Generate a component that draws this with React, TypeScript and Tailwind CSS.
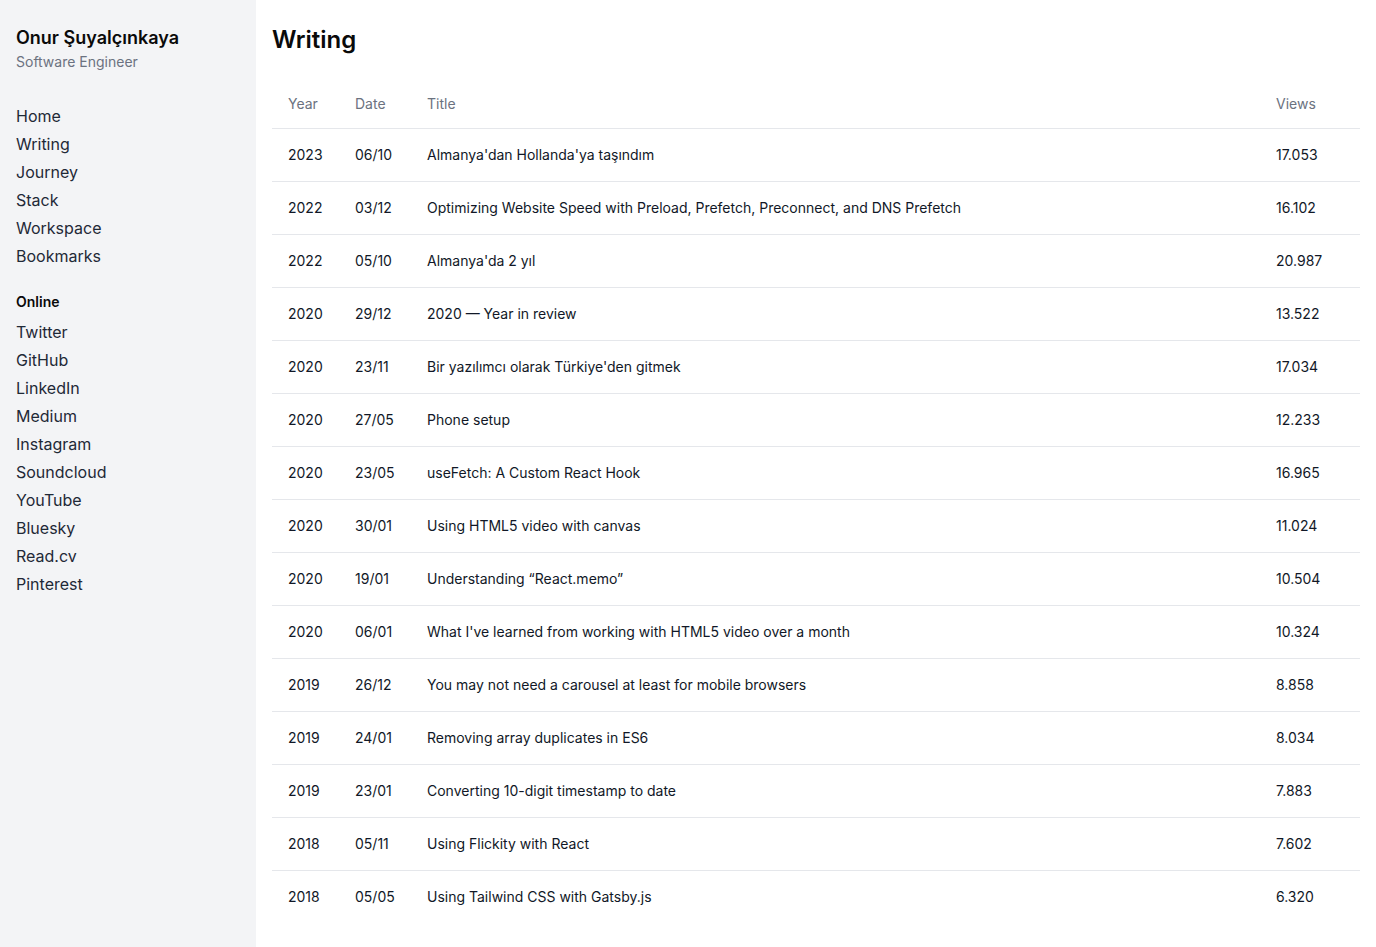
import React from "react";

const nav = ["Home", "Writing", "Journey", "Stack", "Workspace", "Bookmarks"];
const online = ["Twitter", "GitHub", "LinkedIn", "Medium", "Instagram", "Soundcloud", "YouTube", "Bluesky", "Read.cv", "Pinterest"];

const rows: [string, string, string, string][] = [
  ["2023", "06/10", "Almanya'dan Hollanda'ya taşındım", "17.053"],
  ["2022", "03/12", "Optimizing Website Speed with Preload, Prefetch, Preconnect, and DNS Prefetch", "16.102"],
  ["2022", "05/10", "Almanya'da 2 yıl", "20.987"],
  ["2020", "29/12", "2020 — Year in review", "13.522"],
  ["2020", "23/11", "Bir yazılımcı olarak Türkiye'den gitmek", "17.034"],
  ["2020", "27/05", "Phone setup", "12.233"],
  ["2020", "23/05", "useFetch: A Custom React Hook", "16.965"],
  ["2020", "30/01", "Using HTML5 video with canvas", "11.024"],
  ["2020", "19/01", "Understanding “React.memo”", "10.504"],
  ["2020", "06/01", "What I've learned from working with HTML5 video over a month", "10.324"],
  ["2019", "26/12", "You may not need a carousel at least for mobile browsers", "8.858"],
  ["2019", "24/01", "Removing array duplicates in ES6", "8.034"],
  ["2019", "23/01", "Converting 10-digit timestamp to date", "7.883"],
  ["2018", "05/11", "Using Flickity with React", "7.602"],
  ["2018", "05/05", "Using Tailwind CSS with Gatsby.js", "6.320"],
];

export default function App() {
  return (
    <div
      className="flex min-h-[947px] bg-white text-[#111827]"
      style={{ fontFamily: "Inter, 'Noto Sans', sans-serif" }}
    >
      <aside className="w-64 shrink-0 bg-[#f3f4f6] px-4 pt-[24px]">
        <div className="text-lg font-semibold leading-7 text-[#0a0a0a]">Onur Şuyalçınkaya</div>
        <div className="text-sm leading-5 text-[#6b7280]">Software Engineer</div>
        <nav className="mt-[30px] flex flex-col">
          {nav.map((n) => (
            <a key={n} className="text-base leading-7 text-[#1f2937]">
              {n}
            </a>
          ))}
        </nav>
        <div className="mt-[22px] text-sm font-semibold leading-5 text-[#0a0a0a]">Online</div>
        <div className="mt-[6px] flex flex-col">
          {online.map((n) => (
            <a key={n} className="text-base leading-7 text-[#1f2937]">
              {n}
            </a>
          ))}
        </div>
      </aside>
      <main className="flex-1 px-4 pt-6">
        <h1 className="text-2xl font-semibold leading-8 text-[#0a0a0a]">Writing</h1>
        <div className="mt-5 text-sm">
          <div className="grid grid-cols-[67px_72px_1fr_100px] border-b border-[#e5e7eb] text-[#6b7280]">
            <div className="px-4 pt-[18px] pb-[14px] leading-5">Year</div>
            <div className="px-4 pt-[18px] pb-[14px] leading-5">Date</div>
            <div className="px-4 pt-[18px] pb-[14px] leading-5">Title</div>
            <div className="px-4 pt-[18px] pb-[14px] leading-5">Views</div>
          </div>
          {rows.map((r, i) => (
            <div
              key={i}
              className={
                i < rows.length - 1
                  ? "grid grid-cols-[67px_72px_1fr_100px] border-b border-[#e5e7eb] text-[#111827]"
                  : "grid grid-cols-[67px_72px_1fr_100px] border-b border-transparent text-[#111827]"
              }
            >
              <div className="px-4 py-4 leading-5">{r[0]}</div>
              <div className="px-4 py-4 leading-5">{r[1]}</div>
              <div className="px-4 py-4 leading-5">{r[2]}</div>
              <div className="px-4 py-4 leading-5">{r[3]}</div>
            </div>
          ))}
        </div>
      </main>
    </div>
  );
}
